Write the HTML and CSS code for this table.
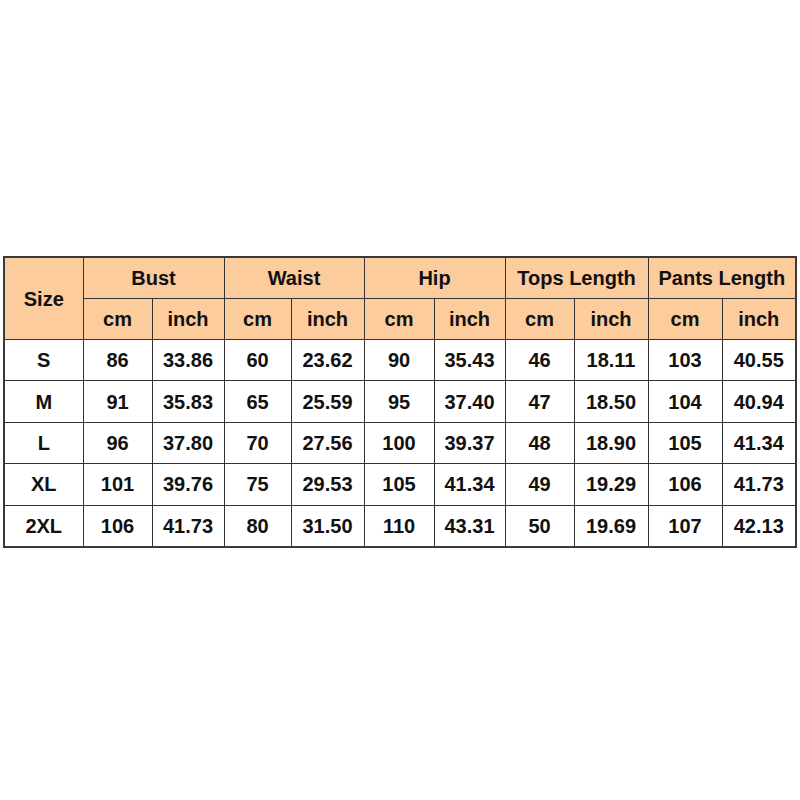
FILE: index.html
```html
<!DOCTYPE html>
<html>
<head>
<meta charset="utf-8">
<link rel="stylesheet" href="styles.css">
</head>
<body>
<table class="size-table">
  <colgroup>
    <col class="c-size"><col class="c1"><col class="c2"><col class="c3"><col class="c4"><col class="c5"><col class="c6"><col class="c7"><col class="c8"><col class="c9"><col class="c10">
  </colgroup>
  <thead>
    <tr>
      <th rowspan="2">Size</th>
      <th colspan="2">Bust</th>
      <th colspan="2">Waist</th>
      <th colspan="2">Hip</th>
      <th colspan="2">Tops Length</th>
      <th colspan="2">Pants Length</th>
    </tr>
    <tr>
      <th>cm</th><th>inch</th><th>cm</th><th>inch</th><th>cm</th><th>inch</th><th>cm</th><th>inch</th><th>cm</th><th>inch</th>
    </tr>
  </thead>
  <tbody>
    <tr><td>S</td><td>86</td><td>33.86</td><td>60</td><td>23.62</td><td>90</td><td>35.43</td><td>46</td><td>18.11</td><td>103</td><td>40.55</td></tr>
    <tr><td>M</td><td>91</td><td>35.83</td><td>65</td><td>25.59</td><td>95</td><td>37.40</td><td>47</td><td>18.50</td><td>104</td><td>40.94</td></tr>
    <tr><td>L</td><td>96</td><td>37.80</td><td>70</td><td>27.56</td><td>100</td><td>39.37</td><td>48</td><td>18.90</td><td>105</td><td>41.34</td></tr>
    <tr><td>XL</td><td>101</td><td>39.76</td><td>75</td><td>29.53</td><td>105</td><td>41.34</td><td>49</td><td>19.29</td><td>106</td><td>41.73</td></tr>
    <tr><td>2XL</td><td>106</td><td>41.73</td><td>80</td><td>31.50</td><td>110</td><td>43.31</td><td>50</td><td>19.69</td><td>107</td><td>42.13</td></tr>
  </tbody>
</table>
</body>
</html>
```
FILE: styles.css
```css
html, body {
  margin: 0;
  padding: 0;
  background: #ffffff;
}
body {
  padding-top: 256px;
  padding-left: 3px;
  font-family: "Liberation Sans", Arial, sans-serif;
}
.size-table {
  border-collapse: collapse;
  table-layout: fixed;
  width: 794px;
  border: 2px solid #3a3a3a;
  box-shadow: 0 1px 0 #9a9a9a;
}
.c-size { width: 79px; }
.c1 { width: 69px; }
.c2 { width: 72px; }
.c3 { width: 67px; }
.c4 { width: 73px; }
.c5 { width: 70px; }
.c6 { width: 71px; }
.c7 { width: 69px; }
.c8 { width: 74px; }
.c9 { width: 74px; }
.c10 { width: 74px; }
.size-table th,
.size-table td {
  border: 1px solid #333333;
  padding: 1px 0 0 0;
  text-align: center;
  vertical-align: middle;
  font-weight: bold;
  font-size: 20px;
  color: #111111;
  height: 39px;
  white-space: nowrap;
}
.size-table td {
  height: 39.4px;
}
.size-table th {
  background: #fccc9c;
}
```
